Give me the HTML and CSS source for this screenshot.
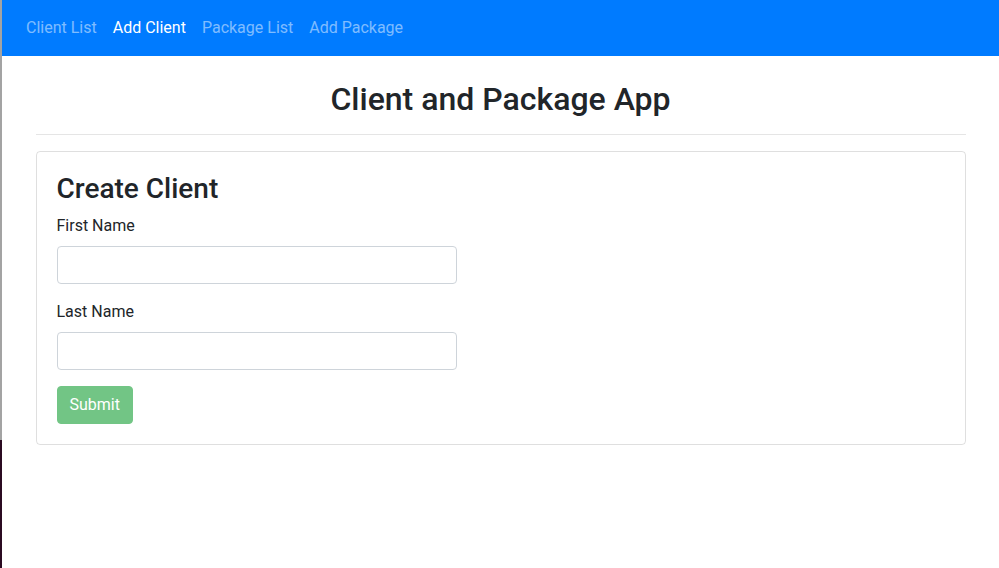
FILE: index.html
```html
<!DOCTYPE html>
<html lang="en">
<head>
<meta charset="utf-8">
<title>Client and Package App</title>
<link rel="stylesheet" href="styles.css">
</head>
<body>
<div class="edge"></div>
<div class="app">
  <nav class="navbar">
    <a class="nav-link" href="#">Client List</a>
    <a class="nav-link active" href="#">Add Client</a>
    <a class="nav-link" href="#">Package List</a>
    <a class="nav-link" href="#">Add Package</a>
  </nav>
  <main class="container">
    <h2 class="title">Client and Package App</h2>
    <hr class="rule">
    <section class="card">
      <h3 class="card-title">Create Client</h3>
      <div class="form-group">
        <label class="label" for="first">First Name</label>
        <input class="input" id="first" type="text">
      </div>
      <div class="form-group">
        <label class="label" for="last">Last Name</label>
        <input class="input" id="last" type="text">
      </div>
      <button class="btn" type="button" disabled>Submit</button>
    </section>
  </main>
</div>
</body>
</html>
```
FILE: styles.css
```css
* { box-sizing: border-box; }
html, body { margin: 0; padding: 0; height: 100%; }
body {
  display: flex;
  font-family: Roboto, "Liberation Sans", sans-serif;
  font-size: 16px;
  line-height: 1.5;
  color: #212529;
  background: #fff;
  overflow: hidden;
}
.edge {
  width: 2px;
  flex: 0 0 2px;
  background: linear-gradient(to bottom, #a3a3a3 0, #a3a3a3 440px, #2b0b22 440px, #2b0b22 100%);
}
.app { flex: 1; min-width: 0; }
.navbar {
  display: flex;
  align-items: center;
  height: 56px;
  padding: 8px 16px;
  background: #007bff;
}
.nav-link {
  display: block;
  padding: 8px;
  color: rgba(255, 255, 255, 0.5);
  text-decoration: none;
  line-height: 24px;
}
.nav-link.active { color: #fff; }
.container {
  max-width: 960px;
  margin: 0 auto;
  padding: 24px 15px 0;
}
.title {
  margin: 0 0 8px;
  font-size: 32px;
  font-weight: 500;
  line-height: 1.2;
  text-align: center;
}
.rule {
  margin: 16px 0;
  border: 0;
  border-top: 1px solid rgba(0, 0, 0, 0.1);
}
.card {
  border: 1px solid rgba(0, 0, 0, 0.125);
  border-radius: 4px;
  padding: 20px;
}
.card-title {
  margin: 0 0 8px;
  font-size: 28px;
  font-weight: 500;
  line-height: 1.2;
}
.form-group { margin-bottom: 16px; }
.label {
  display: block;
  margin-bottom: 8px;
}
.input {
  display: block;
  width: 400px;
  height: 38px;
  padding: 6px 12px;
  font: inherit;
  color: #495057;
  background: #fff;
  border: 1px solid #ced4da;
  border-radius: 4px;
}
.btn {
  display: inline-block;
  height: 38px;
  padding: 6px 12px;
  font: inherit;
  color: #fff;
  background: #28a745;
  border: 1px solid #28a745;
  border-radius: 4px;
  opacity: 0.65;
}
```
